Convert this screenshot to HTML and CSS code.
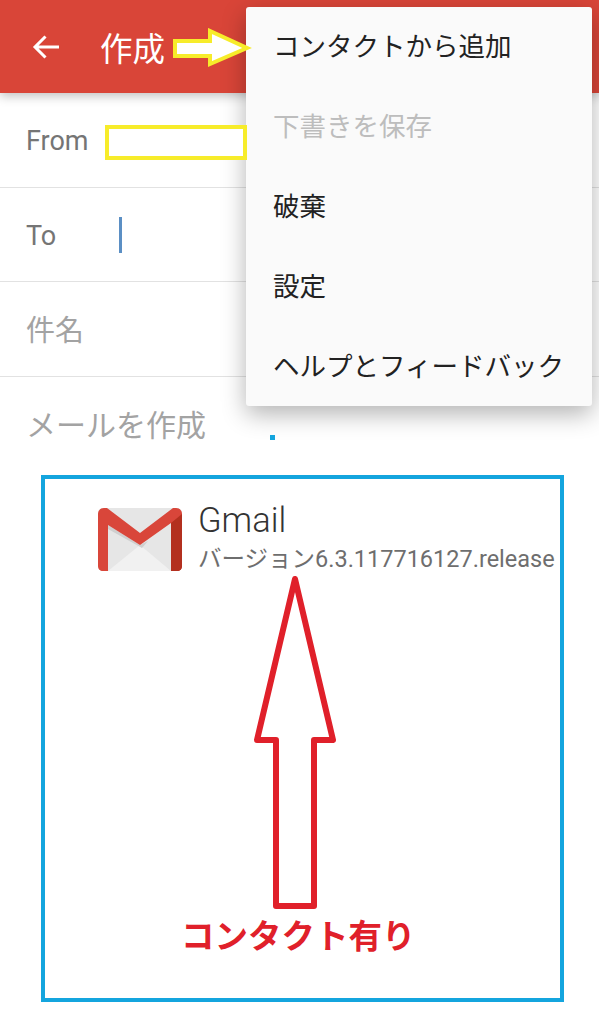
FILE: index.html
```html
<!DOCTYPE html>
<html lang="ja">
<head>
  <meta charset="UTF-8" />
  <title>作成</title>
  <link rel="stylesheet" href="styles.css">
</head>
<body>
  <div class="appbar">
    <svg class="back" width="30" height="30" viewBox="0 0 30 30">
      <path d="M28 15H4M14.500 4.500L4 15l10.500 10.500" fill="none" stroke="#fff" stroke-width="3"/>
    </svg>
    <span class="appbar-title">作成</span>
  </div>

  <div class="row row-from"><span class="row-label">From</span></div>
  <div class="row row-to"><span class="row-label">To</span><span class="caret"></span></div>
  <div class="row row-subject"><span class="row-hint">件名</span></div>
  <div class="compose"><span class="row-hint compose-hint">メールを作成</span></div>

  <div class="about-box">
    <div class="about">
      <svg class="gmail-icon" width="84" height="63" viewBox="0 0 84 63">
        <rect x="0" y="0" width="84" height="63" rx="5" fill="#e6e6e6"/>
        <path d="M10 63L42 37l31 26z" fill="#f1f1f1"/>
        <path d="M10 17l32 20 8-4-6 7-34-19z" fill="#cfcfcf"/>
        <path d="M6 0C2 0 0 3 0 6v52c0 3 2 5 5 5h5V17l32 20 31-22v48h6c3 0 5-2 5-5V6c0-3-2-6-6-6h-3L42 25 9 0z" fill="#d9463a"/>
        <path d="M73 15l11-9v52c0 3-2 5-5 5h-6z" fill="#b3301f"/>
      </svg>
      <div class="about-text">
        <div class="about-name">Gmail</div>
        <div class="about-version">バージョン6.3.117716127.release</div>
      </div>
    </div>
    <div class="contact-note">コンタクト有り</div>
  </div>

  <div class="menu">
    <div class="menu-item">コンタクトから追加</div>
    <div class="menu-item disabled">下書きを保存</div>
    <div class="menu-item">破棄</div>
    <div class="menu-item">設定</div>
    <div class="menu-item">ヘルプとフィードバック</div>
  </div>

  <!-- annotations drawn on top of the screenshot -->
  <div class="mark-from"></div>
  <svg class="mark-arrow" width="80" height="40" viewBox="0 0 80 40">
    <path d="M3 13H38V3L75 20 38 36V28H3z" fill="#fff" stroke="#f7ec2a" stroke-width="4"/>
  </svg>
  <div class="blue-dot"></div>
  <svg class="red-arrow" width="84" height="340" viewBox="0 0 84 340">
    <path d="M42 7L80 168H61V334H23V168H4z" fill="#fff" stroke="#e0202a" stroke-width="6" stroke-linejoin="round"/>
  </svg>
</body>
</html>
```

FILE: styles.css
```css
html, body {
  margin: 0;
  padding: 0;
}
body {
  position: relative;
  width: 599px;
  height: 1024px;
  overflow: hidden;
  background: #fff;
  font-family: "Roboto", "Noto Sans CJK JP", sans-serif;
}
.appbar {
  display: flex;
  align-items: center;
  height: 93px;
  padding-left: 31px;
  box-sizing: border-box;
  background: #d94538;
  box-shadow: 0 3px 10px rgba(0,0,0,0.25);
}
.appbar-title {
  margin-left: 39px;
  color: #fff;
  font-size: 32.500px;
}
.row {
  display: flex;
  align-items: center;
  height: 94px;
  padding-left: 26px;
  box-sizing: border-box;
  border-bottom: 1px solid #e2e2e2;
}
.row-from { height: 95px; }
.row-subject { height: 95px; padding-bottom: 2px; }
.row-label {
  width: 93px;
  padding-top: 2px;
  color: #757575;
  font-size: 27px;
}
.row-hint {
  color: #a3a3a3;
  font-size: 29px;
}
.compose-hint { font-size: 30px; }
.caret {
  width: 3px;
  height: 36px;
  background: #5b8fc4;
}
.compose {
  padding: 24px 0 0 26px;
  height: 98px;
  box-sizing: border-box;
}
.about-box {
  width: 523px;
  height: 527px;
  margin-left: 41px;
  box-sizing: border-box;
  border: 4px solid #14a5de;
  display: flex;
  flex-direction: column;
  justify-content: space-between;
}
.about {
  display: flex;
  padding: 21px 0 0 53px;
}
.gmail-icon { margin-top: 8px; }
.about-text { margin-left: 16px; }
.about-name {
  color: #333;
  font-size: 34.500px;
  font-weight: 300;
  line-height: 40px;
}
.about-version {
  color: #6e6e6e;
  font-size: 23.500px;
  line-height: 38px;
  white-space: nowrap;
}
.contact-note {
  margin: 0 0 39px 136px;
  color: #e0202a;
  font-size: 33.500px;
  font-weight: 700;
  line-height: 44px;
}
.menu {
  position: absolute;
  top: 7px;
  left: 246px;
  width: 346px;
  height: 399px;
  background: #fafafa;
  border-radius: 3px;
  box-shadow: 0 8px 24px rgba(0,0,0,0.3);
}
.menu-item {
  height: 80px;
  line-height: 79px;
  padding-left: 27px;
  color: #222;
  font-size: 26.500px;
  white-space: nowrap;
}
.menu-item.disabled { color: #bdbdbd; }
.mark-from {
  position: absolute;
  top: 125px;
  left: 105px;
  width: 142px;
  height: 35px;
  box-sizing: border-box;
  border: 4px solid #f7ec2a;
  background: #fff;
}
.mark-arrow {
  position: absolute;
  top: 28px;
  left: 172px;
}
.blue-dot {
  position: absolute;
  top: 435px;
  left: 270px;
  width: 5px;
  height: 5px;
  background: #14a5de;
}
.red-arrow {
  position: absolute;
  top: 572px;
  left: 253px;
}
```
